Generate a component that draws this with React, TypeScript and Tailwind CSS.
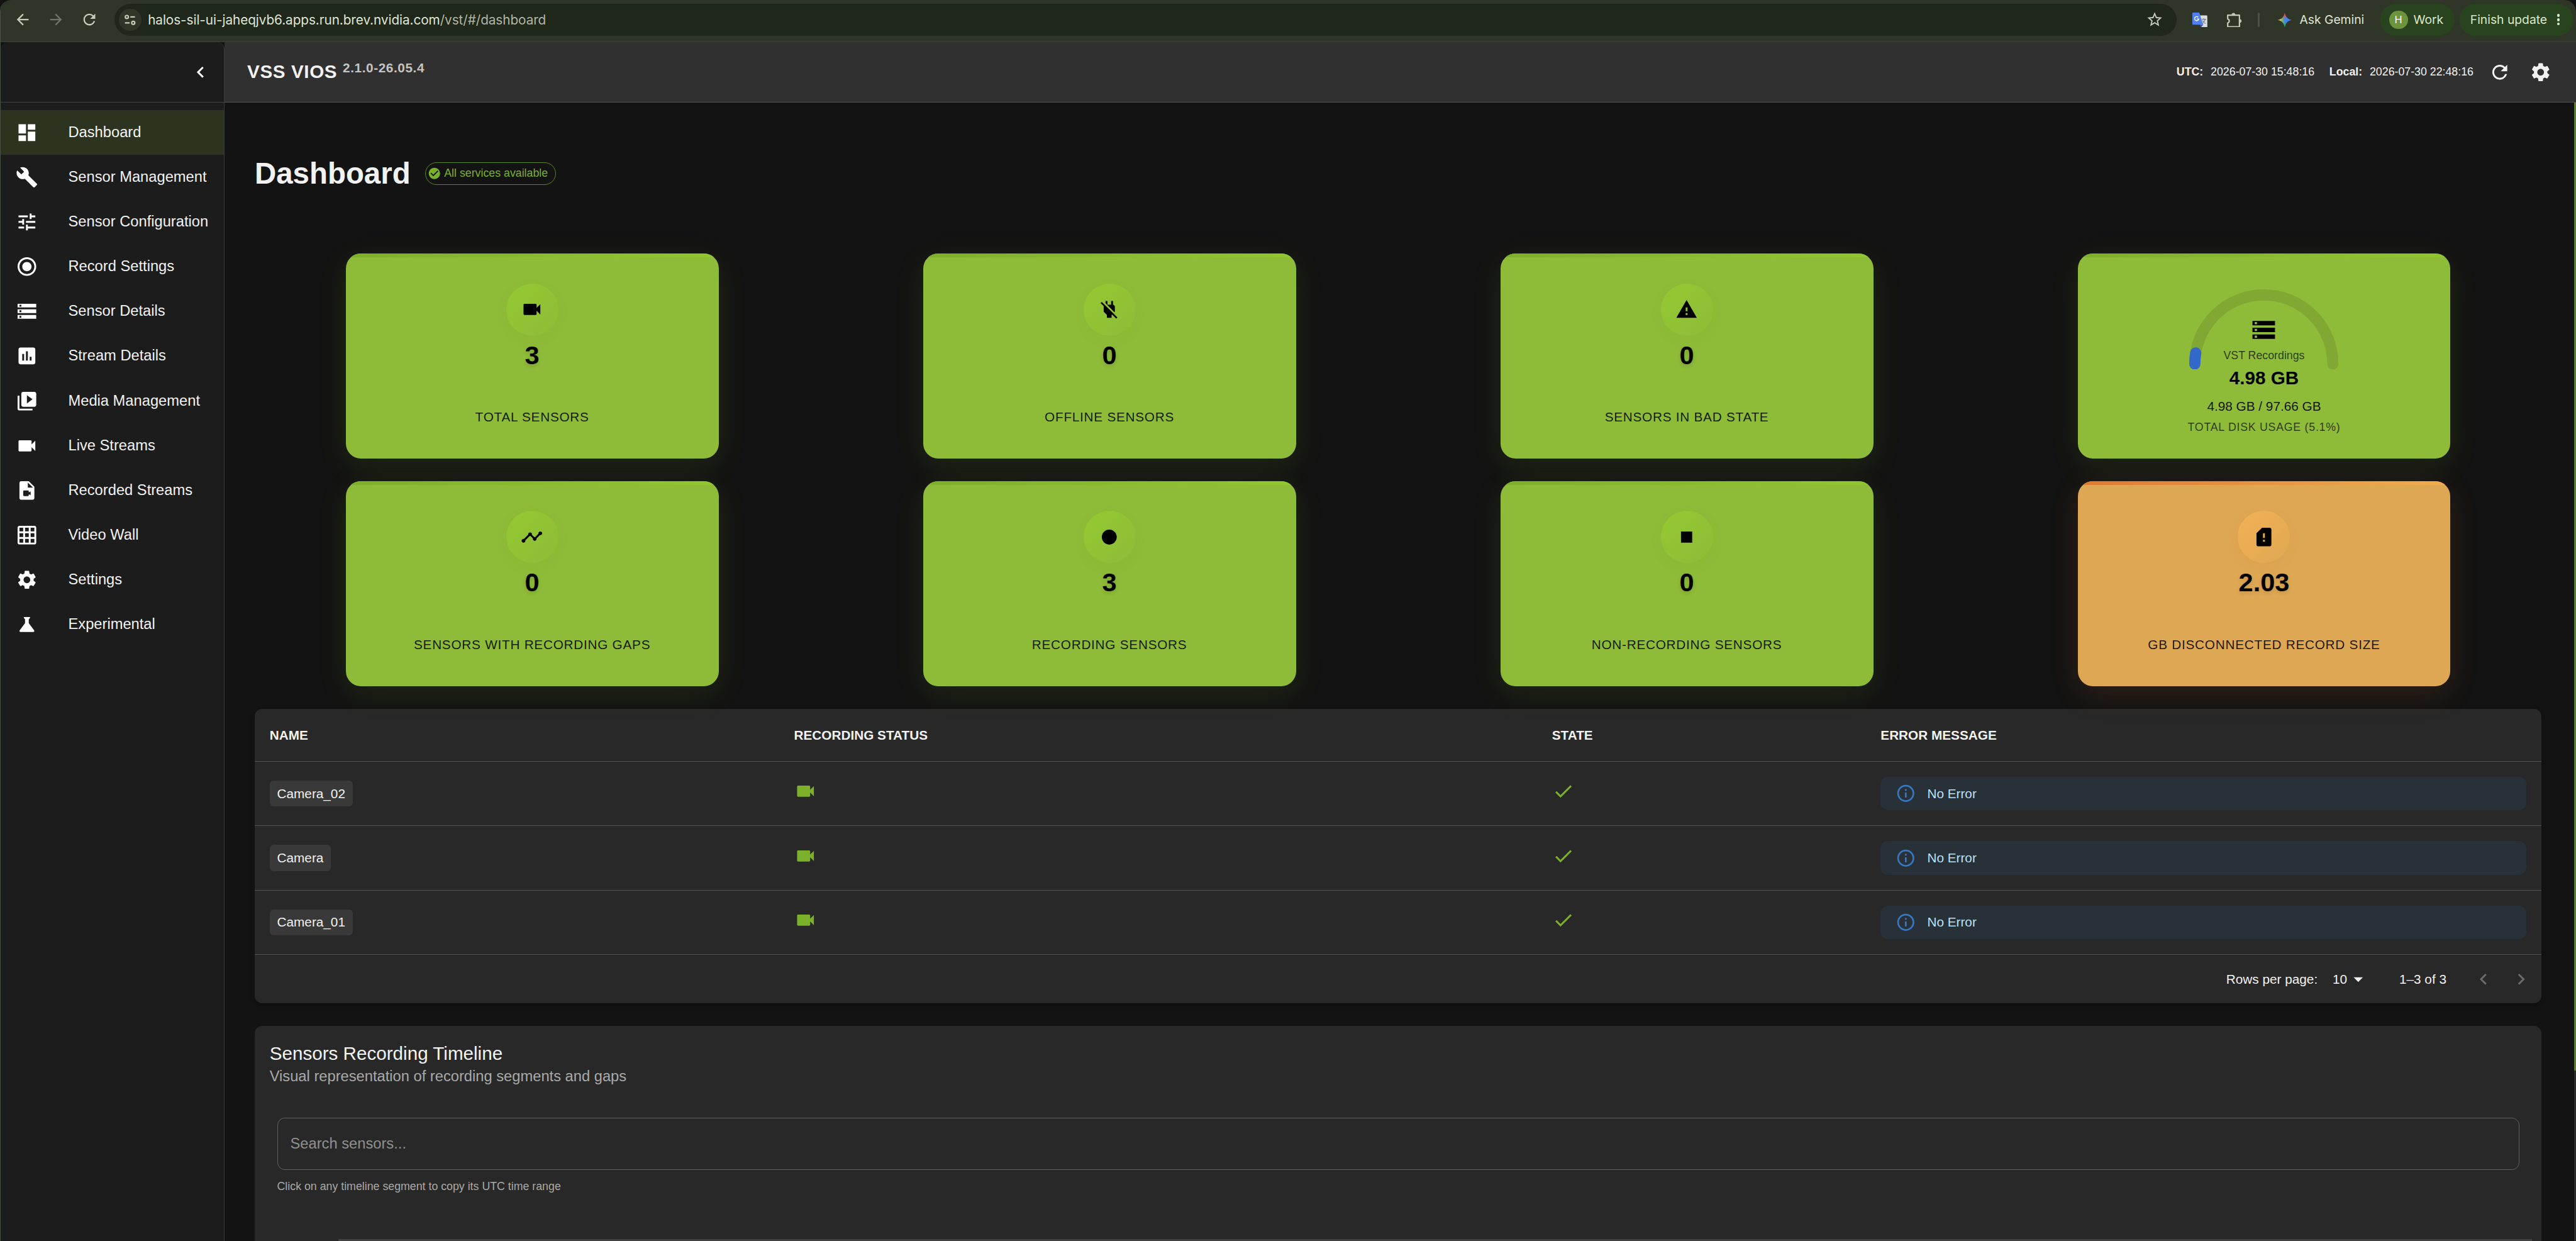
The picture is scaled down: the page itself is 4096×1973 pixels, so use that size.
import React from 'react';
import type { IconType } from 'react-icons';
import {
  MdArrowBack,
  MdArrowDropDown,
  MdArrowForward,
  MdAssessment,
  MdBuild,
  MdCheck,
  MdCheckCircle,
  MdChevronLeft,
  MdChevronRight,
  MdDashboard,
  MdFiberManualRecord,
  MdGridOn,
  MdInfoOutline,
  MdPowerOff,
  MdRadioButtonChecked,
  MdRefresh,
  MdScience,
  MdSdCardAlert,
  MdSettings,
  MdStarBorder,
  MdStop,
  MdStorage,
  MdTimeline,
  MdTune,
  MdVideoFile,
  MdVideoLibrary,
  MdVideocam,
  MdWarning,
} from 'react-icons/md';

const navItems: { label: string; icon: IconType }[] = [
  { label: 'Dashboard', icon: MdDashboard },
  { label: 'Sensor Management', icon: MdBuild },
  { label: 'Sensor Configuration', icon: MdTune },
  { label: 'Record Settings', icon: MdRadioButtonChecked },
  { label: 'Sensor Details', icon: MdStorage },
  { label: 'Stream Details', icon: MdAssessment },
  { label: 'Media Management', icon: MdVideoLibrary },
  { label: 'Live Streams', icon: MdVideocam },
  { label: 'Recorded Streams', icon: MdVideoFile },
  { label: 'Video Wall', icon: MdGridOn },
  { label: 'Settings', icon: MdSettings },
  { label: 'Experimental', icon: MdScience },
];

const sensors = ['Camera_02', 'Camera', 'Camera_01'];

const BrowserBar: React.FC = () => (
  <div className="flex h-[45px] shrink-0 items-center rounded-t-xl border-b border-[#3d4038] bg-[#2f3628] pb-[2px] font-[Inter,sans-serif] text-[#c3cbb5]">
    <MdArrowBack className="ml-[14px] h-[19px] w-[19px]" />
    <MdArrowForward className="ml-[17px] h-[19px] w-[19px] text-[#6d7463]" />
    <MdRefresh className="ml-[17px] h-[19px] w-[19px]" />

    {/* Address field */}
    <div className="ml-[17px] flex h-[34px] w-[2212px] items-center rounded-full bg-[#1f261a] pr-[14px] pl-[5px]">
      <div className="flex h-6 w-6 items-center justify-center rounded-full bg-[#2f3628]">
        <svg viewBox="0 0 14 14" className="h-[13px] w-[13px]" fill="none" stroke="currentColor" strokeWidth="1.6">
          <circle cx="3.4" cy="3.6" r="1.8" />
          <path d="M7.4 3.6h5.4M1.2 10.4h5.4" />
          <circle cx="10.8" cy="10.4" r="1.8" />
        </svg>
      </div>
      <span className="ml-[7px] text-[14px] tracking-[-0.05px] whitespace-nowrap text-[#dfe5d5]">
        halos-sil-ui-jaheqjvb6.apps.run.brev.nvidia.com
        <span className="text-[#b0b6a6]">/vst/#/dashboard</span>
      </span>
      <MdStarBorder className="ml-auto h-[19px] w-[19px] text-[#c4c8be]" />
    </div>

    <svg viewBox="0 0 16 16" className="ml-[17px] h-4 w-4">
      <path d="M8 3h7.2a.8.8 0 0 1 .8.8v11.4a.8.8 0 0 1-.8.8H9z" fill="#dcdedf" />
      <path d="M8 13l1 3 2.8-3z" fill="#3a48c4" />
      <path d="M.8 0h6.6l4.2 13H.8a.8.8 0 0 1-.8-.8V.8A.8.8 0 0 1 .8 0z" fill="#5080ee" />
      <path d="M10.2 7.2h4.4M12.2 6v1.2M13.8 7.4c-.5 1.9-1.6 3.4-3 4.2M11 8.4c.6 1.6 1.8 2.7 3.2 3.4" stroke="#6b7f8a" strokeWidth=".8" fill="none" />
      <path d="M6.3 5.1A2.2 2.2 0 1 0 6.8 6.8H4.7" stroke="#fff" strokeWidth=".95" fill="none" />
    </svg>
    <svg viewBox="0 0 16 16" className="ml-[21px] h-4 w-4" fill="none" stroke="currentColor" strokeWidth="1.5" strokeLinejoin="round">
      <path d="M.8 2.8h12.6v12.4H.8v-4a2.3 2.3 0 0 0 0-4.4z" />
      <path d="M5.2 2.4a1.8 1.8 0 0 1 3.6 0zM13.6 7.2a1.8 1.8 0 0 1 0 3.6z" fill="currentColor" strokeWidth=".6" />
    </svg>
    <div className="ml-[17px] h-4 w-[2px] rounded-full bg-[#4a5140]" />
    <svg viewBox="0 0 16 16" className="ml-[19px] h-4 w-4">
      <defs>
        <linearGradient id="sparkH" x1="0" x2="1" y1="0" y2="0">
          <stop offset="0" stopColor="#f4b92b" />
          <stop offset=".2" stopColor="#d9bf3c" />
          <stop offset=".34" stopColor="#6fb36a" />
          <stop offset=".5" stopColor="#3f86ee" />
          <stop offset="1" stopColor="#3f79f5" />
        </linearGradient>
        <linearGradient id="sparkV" x1="0" x2="0" y1="0" y2="1">
          <stop offset="0" stopColor="#f04b3d" />
          <stop offset=".15" stopColor="#f04b3d" />
          <stop offset=".42" stopColor="#f04b3d" stopOpacity="0" />
          <stop offset=".62" stopColor="#2fa95a" stopOpacity="0" />
          <stop offset=".85" stopColor="#2fa95a" />
        </linearGradient>
      </defs>
      <path d="M8 .4C8.7 4.6 11.4 7.3 15.6 8 11.4 8.7 8.7 11.4 8 15.6 7.3 11.4 4.6 8.7.4 8 4.6 7.3 7.3 4.6 8 .4z" fill="url(#sparkH)" />
      <path d="M8 .4C8.7 4.6 11.4 7.3 15.6 8 11.4 8.7 8.7 11.4 8 15.6 7.3 11.4 4.6 8.7.4 8 4.6 7.3 7.3 4.6 8 .4z" fill="url(#sparkV)" />
    </svg>
    <span className="ml-2 w-[70px] text-[13px] whitespace-nowrap text-[#dfe5d5]">Ask Gemini</span>

    <div className="ml-4 flex h-[34px] w-20 items-center rounded-full bg-[#29431e] pl-[10px] text-[#d8e8cc]">
      <span className="flex h-5 w-5 items-center justify-center rounded-full bg-[#6b943d] text-[11px] text-white">H</span>
      <span className="ml-[6px] text-[13px]">Work</span>
    </div>
    <div className="ml-[5px] flex h-[34px] w-[123px] items-center rounded-full bg-[#29431e] pl-3 text-[#d8e8cc]">
      <span className="w-[82px] text-[13px] whitespace-nowrap">Finish update</span>
      <div className="ml-[11px] flex flex-col gap-[1.5px]">
        <i className="h-[3px] w-[3px] rounded-full bg-current" />
        <i className="h-[3px] w-[3px] rounded-full bg-current" />
        <i className="h-[3px] w-[3px] rounded-full bg-current" />
      </div>
    </div>
  </div>
);

const Sidebar: React.FC = () => (
  <aside className="flex w-[240px] shrink-0 flex-col rounded-t-lg border-r border-[#3b3b3b] bg-[#1c1c1c]">
    <div className="flex h-[65px] shrink-0 items-center justify-end border-b border-[#424242] pr-[13px]">
      <MdChevronLeft className="h-6 w-6 text-white" />
    </div>
    <nav className="flex flex-col pt-2">
      {navItems.map(({ label, icon: Icon }, i) => (
        <a key={label} className={`flex h-12 items-center pl-4 ${i === 0 ? 'bg-[#2c3420]' : ''}`}>
          <Icon className="h-6 w-6 text-white" />
          <span className="ml-[32.5px] text-base whitespace-nowrap">{label}</span>
        </a>
      ))}
    </nav>
  </aside>
);

const Header: React.FC = () => (
  <header className="flex h-[65px] shrink-0 items-center border-b border-[#505050] bg-[#303030] pr-[26px] pl-[24.5px]">
    <h1 className="text-[20px] font-bold tracking-[0.4px] whitespace-nowrap">VSS VIOS</h1>
    <span className="ml-[6px] pb-[9px] text-[14px] font-bold tracking-[0.4px] text-[#c4c4c4]">2.1.0-26.05.4</span>
    <div className="ml-auto flex items-center gap-2 text-xs whitespace-nowrap">
      <b>UTC:</b>
      <span>2026-07-30 15:48:16</span>
      <b className="ml-2">Local:</b>
      <span>2026-07-30 22:48:16</span>
    </div>
    <MdRefresh className="ml-4 h-6 w-6" />
    <MdSettings className="ml-5 h-6 w-6" />
  </header>
);

type StatProps = { icon: IconType; value: string; label: string; warn?: boolean };

const cardTones = {
  ok: 'bg-[#8ebb38] shadow-[0_8px_32px_rgba(142,199,50,0.11)]',
  warn: 'bg-[#dea754] shadow-[0_8px_32px_rgba(223,123,48,0.14)]',
};

const stripTones = {
  ok: 'bg-linear-to-r from-[#7eb02b] to-[#90c730]',
  warn: 'bg-linear-to-r from-[#de7a2f] to-[#f0ad50]',
};

const Card: React.FC<{ tone: 'ok' | 'warn'; children: React.ReactNode }> = ({ tone, children }) => (
  <div className={`h-[220px] w-[400px] justify-self-center rounded-2xl text-black ${cardTones[tone]}`}>
    <div className="flex h-full flex-col overflow-hidden rounded-2xl">
      <div className={`h-1 shrink-0 ${stripTones[tone]}`} />
      {children}
    </div>
  </div>
);

const StatCard: React.FC<StatProps> = ({ icon: Icon, value, label, warn }) => (
  <Card tone={warn ? 'warn' : 'ok'}>
    <div className="flex flex-col items-center pt-7">
      <div
        className={`flex h-14 w-14 items-center justify-center rounded-full bg-linear-135 ${
          warn
            ? 'from-[#f2b155] to-[#dfa853] shadow-[0_4px_12px_rgba(223,123,48,0.12)]'
            : 'from-[#93ca30] to-[#8ebb38] shadow-[0_4px_12px_rgba(118,176,40,0.1)]'
        }`}
      >
        <Icon className="h-6 w-6" />
      </div>
      <div className="text-[28px] leading-[42px] font-bold [text-shadow:0_2px_4px_rgba(0,0,0,0.12)]">{value}</div>
      <div className="mt-[33px] text-sm leading-6 tracking-[0.5px] text-black/87">{label}</div>
    </div>
  </Card>
);

const DiskCard: React.FC = () => (
  <Card tone="ok">
    <div className="grid justify-items-center">
      <svg viewBox="0 0 160 86" className="col-start-1 row-start-1 mt-[34px] h-[86px] w-40" fill="none" strokeWidth="12" strokeLinecap="round">
        <path d="M6 80a74 74 0 0 1 148 0" stroke="#80a832" />
        <path d="M6 80a74 74 0 0 1 .95-11.81" stroke="#3368cb" />
      </svg>
      <div className="col-start-1 row-start-1 flex flex-col items-center pt-[63.5px] whitespace-nowrap">
        <MdStorage className="h-[29px] w-[29px]" />
        <span className="mt-[3px] text-xs leading-5 text-black/70">VST Recordings</span>
        <span className="text-xl leading-[28px] font-bold">4.98 GB</span>
        <span className="mt-[6px] text-sm leading-5 text-black/90">4.98 GB / 97.66 GB</span>
        <span className="mt-[3px] text-xs leading-5 tracking-[0.5px] text-black/70">TOTAL DISK USAGE (5.1%)</span>
      </div>
    </div>
  </Card>
);

const columns = 'grid grid-cols-[562.5px_813px_352.5px_1fr] items-center border-b border-[#525252] *:pl-4';

const SensorTable: React.FC = () => (
  <section className="mt-6 rounded-lg bg-white/9 shadow-[0_2px_4px_rgba(0,0,0,0.3)]">
    <div className={`${columns} h-[57px] text-sm font-bold`}>
      <span>NAME</span>
      <span>RECORDING STATUS</span>
      <span>STATE</span>
      <span>ERROR MESSAGE</span>
    </div>
    {sensors.map((name) => (
      <div key={name} className={`${columns} h-[69px]`}>
        <div>
          <span className="inline-flex h-7 items-center rounded bg-[#393939] px-2 text-sm">{name}</span>
        </div>
        <div className="pb-[5px]">
          <MdVideocam className="h-6 w-6 text-[#7bb02a]" />
        </div>
        <div className="pb-[5px]">
          <MdCheck className="h-6 w-6 text-[#7bb02a]" />
        </div>
        <div className="pr-4">
          <div className="flex h-9 items-center gap-3 rounded-lg bg-[#283038] pl-4 text-sm text-[#b8e2f8]">
            <MdInfoOutline className="h-[22px] w-[22px] text-[#3577c2]" />
            No Error
          </div>
        </div>
      </div>
    ))}
    <div className="flex h-[52px] items-center justify-end pr-[10px] text-sm">
      <span>Rows per page:</span>
      <span className="ml-4">10</span>
      <MdArrowDropDown className="h-6 w-6" />
      <span className="ml-8">1–3 of 3</span>
      <MdChevronLeft className="ml-7 h-6 w-6 text-[#6a6a6a]" />
      <MdChevronRight className="ml-4 h-6 w-6 text-[#6a6a6a]" />
    </div>
  </section>
);

const Timeline: React.FC = () => (
  <section className="mt-6 flex-1 rounded-t-lg bg-[#282828] px-4 pt-[17px]">
    <h3 className="text-xl leading-[26px]">Sensors Recording Timeline</h3>
    <p className="text-base leading-6 text-[#a9a9a9]">Visual representation of recording segments and gaps</p>
    <div className="mx-2 mt-8 flex h-14 items-center rounded-lg border border-[#606060] px-[13.5px] text-base text-[#909090]">
      Search sensors...
    </div>
    <p className="mx-2 mt-[8px] text-xs leading-5 text-[#a9a9a9]">Click on any timeline segment to copy its UTC time range</p>
    {/* Top edge of the timeline chart */}
    <div className="mt-[46px] mr-[-6px] ml-[74px] h-4 bg-[#444444]" />
  </section>
);

export default function App() {
  return (
    <div className="h-screen w-screen overflow-hidden bg-[#131313]">
      <div className="flex h-full w-full flex-col overflow-hidden rounded-t-xl border-l border-[#4a5244] font-['Liberation_Sans',Arial,sans-serif] text-[#f2f2f2] [zoom:1.48244]">
        <BrowserBar />
        <div className="flex min-h-0 flex-1">
          <Sidebar />
          <div className="flex min-w-0 flex-1 flex-col">
            <Header />
            <div className="flex min-h-0 flex-1">
              <main className="flex min-w-0 flex-1 flex-col overflow-hidden pr-[35px] pl-[32.5px]">
                <div className="mt-[56px] mb-[66px] flex h-10 items-center">
                  <h2 className="text-[32px] leading-10 font-bold">Dashboard</h2>
                  <span className="ml-4 flex h-6 w-[140px] items-center rounded-full border border-[#5b8a20] pl-[2px] text-xs whitespace-nowrap text-[#7bb02a]">
                    <MdCheckCircle className="mr-[3px] h-[14.5px] w-[14.5px]" />
                    All services available
                  </span>
                </div>
                <div className="grid shrink-0 grid-cols-4 gap-6">
                  <StatCard icon={MdVideocam} value="3" label="TOTAL SENSORS" />
                  <StatCard icon={MdPowerOff} value="0" label="OFFLINE SENSORS" />
                  <StatCard icon={MdWarning} value="0" label="SENSORS IN BAD STATE" />
                  <DiskCard />
                  <StatCard icon={MdTimeline} value="0" label="SENSORS WITH RECORDING GAPS" />
                  <StatCard icon={MdFiberManualRecord} value="3" label="RECORDING SENSORS" />
                  <StatCard icon={MdStop} value="0" label="NON-RECORDING SENSORS" />
                  <StatCard icon={MdSdCardAlert} value="2.03" label="GB DISCONNECTED RECORD SIZE" warn />
                </div>
                <SensorTable />
                <Timeline />
              </main>
              {/* Page scrollbar */}
              <div className="w-[2px] bg-[#2c2c2c]">
                <div className="h-[85%] bg-[#5c821e]" />
              </div>
            </div>
          </div>
        </div>
      </div>
    </div>
  );
}
